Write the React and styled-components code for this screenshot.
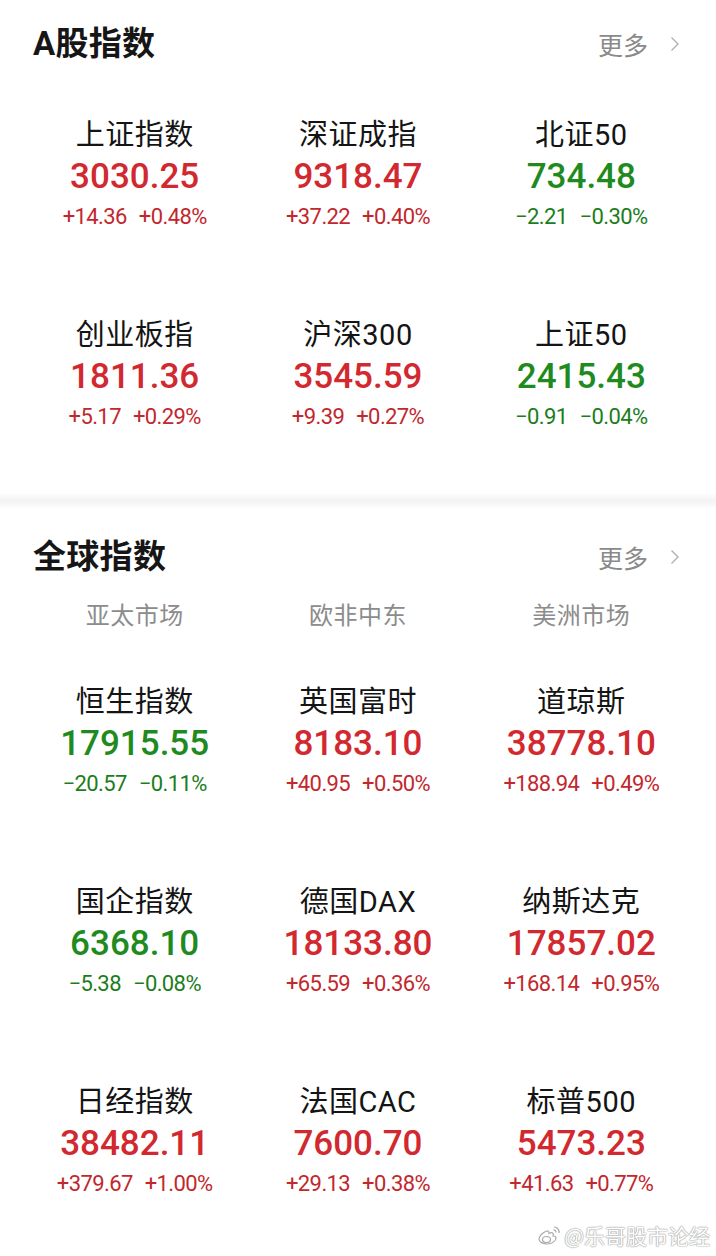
import React from "react";
import styled, { createGlobalStyle } from "styled-components";

const Global = createGlobalStyle`
  html, body { margin: 0; padding: 0; background: #fff; }
  body { font-family: Roboto, "Noto Sans CJK SC", sans-serif; }
`;

const RED = "#d2282f";
const RED_DARK = "#c2272d";
const GREEN = "#1f8b1f";
const GREEN_DARK = "#1b7d1b";

const Page = styled.div`
  position: relative;
  width: 716px;
  height: 1256px;
  overflow: hidden;
  background: #fff;
`;

const Section = styled.section`
  display: flex;
  flex-direction: column;
  padding: ${(p) => p.$pt}px 23px 0;
`;

const Header = styled.div`
  display: flex;
  align-items: center;
  justify-content: space-between;
  height: 40px;
  padding: 0 13px 0 10px;
`;

const Title = styled.h2`
  margin: 0;
  font-family: Roboto, "Noto Sans CJK SC", sans-serif;
  font-size: 33px;
  font-weight: 700;
  color: #161616;
  line-height: 40px;
  letter-spacing: 0.3px;
`;

const More = styled.div`
  display: flex;
  align-items: center;
  gap: 22px;
  font-family: "Noto Sans CJK SC", sans-serif;
  font-size: 25px;
  color: #8a8a8a;
`;

const Grid = styled.div`
  display: grid;
  grid-template-columns: repeat(3, 1fr);
  margin-top: ${(p) => p.$mt || 0}px;
`;

const Tabs = styled(Grid)`
  margin-top: 19px;
  margin-bottom: 23px;
`;

const Tab = styled.div`
  text-align: center;
  font-family: "Noto Sans CJK SC", sans-serif;
  font-size: 24px;
  line-height: 36px;
  color: #8c8c8c;
  letter-spacing: 0.5px;
`;

const Cell = styled.div`
  display: flex;
  flex-direction: column;
  align-items: center;
  height: 200px;
  padding-top: 27px;
  box-sizing: border-box;
`;

const Name = styled.div`
  font-family: Roboto, "Noto Sans CJK SC", sans-serif;
  font-size: 29px;
  line-height: 40px;
  color: #141414;
  letter-spacing: 0.5px;
`;

const Value = styled.div`
  font-family: Roboto, sans-serif;
  font-size: 35px;
  font-weight: 500;
  line-height: 44px;
  color: ${(p) => (p.$up ? RED : GREEN)};
  letter-spacing: 0;
`;

const Change = styled.div`
  display: flex;
  gap: 12px;
  font-family: Roboto, sans-serif;
  font-size: 22px;
  line-height: 36px;
  color: ${(p) => (p.$up ? RED_DARK : GREEN_DARK)};
  letter-spacing: -0.6px;
`;

const Divider = styled.div`
  height: 14px;
  margin-top: 6px;
  background: linear-gradient(
    to bottom,
    #fdfdfd 0%,
    #f3f3f3 50%,
    #fdfdfd 100%
  );
`;

const Watermark = styled.div`
  position: absolute;
  right: 6px;
  bottom: 6px;
  display: flex;
  align-items: center;
  gap: 3px;
  font-family: "Noto Sans CJK SC", sans-serif;
  font-size: 21px;
  color: #fff;
  text-shadow: 0 0 1px #9a9a9a, 0 0 1px #9a9a9a, 0 0 2px #bbb;
`;

const Chevron = () => (
  <svg width="10" height="16" viewBox="0 0 10 16">
    <polyline points="1.5,1.5 8,8 1.5,14.5" fill="none" stroke="#b0b0b0" strokeWidth="1.4" />
  </svg>
);

const WeiboIcon = () => (
  <svg width="24" height="22" viewBox="0 0 24 22">
    <g fill="#fff" stroke="#a8a8a8" strokeWidth="1.2">
      <path d="M10 7c-4 1-8 5-8 8 0 3 4 5 8 5 5 0 9-3 9-6 0-2-2-2-3-2 1-2 0-4-3-3l-1 .5c.3-2-1-3-2-2.5z" />
      <ellipse cx="9.5" cy="15.5" rx="4" ry="3" />
      <path d="M17 3a5 5 0 0 1 5 6" fill="none" />
      <path d="M16.5 6a2.2 2.2 0 0 1 2.5 2.5" fill="none" />
    </g>
  </svg>
);

const aStocks = [
  { name: "上证指数", value: "3030.25", chg: "+14.36", pct: "+0.48%", up: true },
  { name: "深证成指", value: "9318.47", chg: "+37.22", pct: "+0.40%", up: true },
  { name: "北证50", value: "734.48", chg: "−2.21", pct: "−0.30%", up: false },
  { name: "创业板指", value: "1811.36", chg: "+5.17", pct: "+0.29%", up: true },
  { name: "沪深300", value: "3545.59", chg: "+9.39", pct: "+0.27%", up: true },
  { name: "上证50", value: "2415.43", chg: "−0.91", pct: "−0.04%", up: false },
];

const global = [
  { name: "恒生指数", value: "17915.55", chg: "−20.57", pct: "−0.11%", up: false },
  { name: "英国富时", value: "8183.10", chg: "+40.95", pct: "+0.50%", up: true },
  { name: "道琼斯", value: "38778.10", chg: "+188.94", pct: "+0.49%", up: true },
  { name: "国企指数", value: "6368.10", chg: "−5.38", pct: "−0.08%", up: false },
  { name: "德国DAX", value: "18133.80", chg: "+65.59", pct: "+0.36%", up: true },
  { name: "纳斯达克", value: "17857.02", chg: "+168.14", pct: "+0.95%", up: true },
  { name: "日经指数", value: "38482.11", chg: "+379.67", pct: "+1.00%", up: true },
  { name: "法国CAC", value: "7600.70", chg: "+29.13", pct: "+0.38%", up: true },
  { name: "标普500", value: "5473.23", chg: "+41.63", pct: "+0.77%", up: true },
];

const IndexCell = ({ item }) => (
  <Cell>
    <Name>{item.name}</Name>
    <Value $up={item.up}>{item.value}</Value>
    <Change $up={item.up}>
      <span>{item.chg}</span>
      <span>{item.pct}</span>
    </Change>
  </Cell>
);

const SectionHeader = ({ title }) => (
  <Header>
    <Title>{title}</Title>
    <More>
      <span>更多</span>
      <Chevron />
    </More>
  </Header>
);

export default function App() {
  return (
    <Page>
      <Global />
      <Section $pt={24}>
        <SectionHeader title="A股指数" />
        <Grid $mt={24}>
          {aStocks.map((s) => (
            <IndexCell key={s.name} item={s} />
          ))}
        </Grid>
      </Section>
      <Divider />
      <Section $pt={29}>
        <SectionHeader title="全球指数" />
        <Tabs>
          <Tab>亚太市场</Tab>
          <Tab>欧非中东</Tab>
          <Tab>美洲市场</Tab>
        </Tabs>
        <Grid>
          {global.map((s) => (
            <IndexCell key={s.name} item={s} />
          ))}
        </Grid>
      </Section>
      <Watermark>
        <WeiboIcon />
        <span>@乐哥股市论经</span>
      </Watermark>
    </Page>
  );
}
